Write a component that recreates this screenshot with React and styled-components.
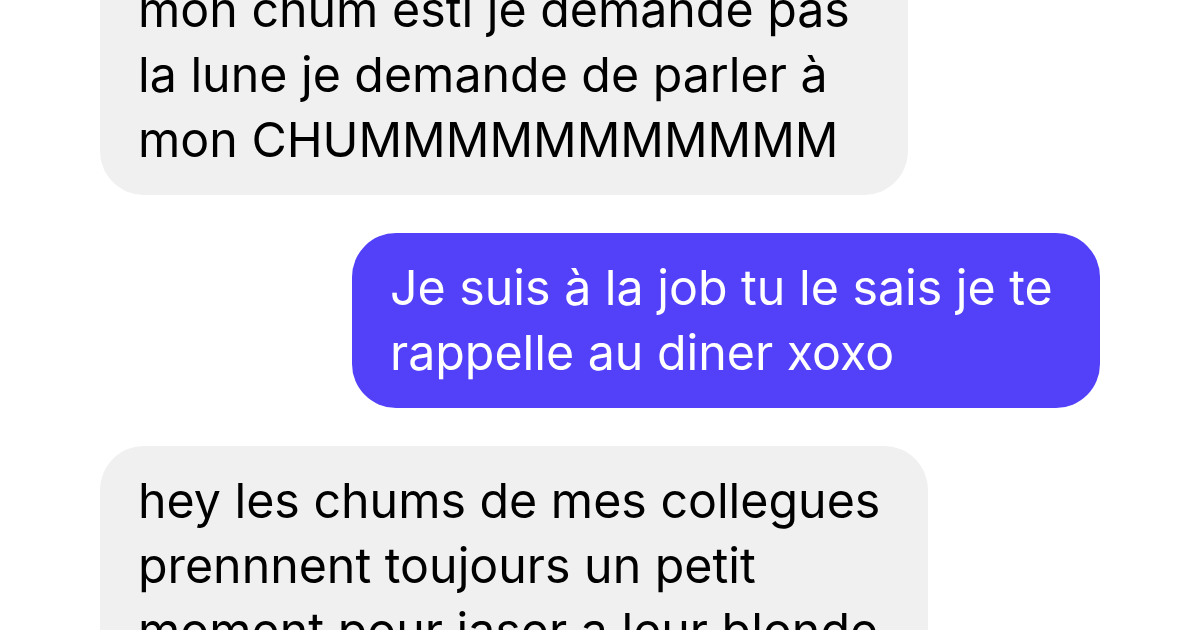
import React from "react";
import styled, { createGlobalStyle } from "styled-components";

const GlobalStyle = createGlobalStyle`
  html, body {
    margin: 0;
    padding: 0;
    background: #ffffff;
  }
  body {
    font-family: Inter, "Noto Sans", "Liberation Sans", sans-serif;
  }
`;

const Page = styled.div`
  width: 1200px;
  height: 630px;
  overflow: hidden;
  background: #ffffff;
`;

const Thread = styled.div`
  display: flex;
  flex-direction: column;
  gap: 38px;
  padding: 0 100px;
  margin-top: ${(p) => p.$offset}px;
`;

const Bubble = styled.div`
  box-sizing: border-box;
  width: ${(p) => p.$width}px;
  align-self: ${(p) => (p.$out ? "flex-end" : "flex-start")};
  background: ${(p) => (p.$out ? "#5341FA" : "#F0F0F0")};
  color: ${(p) => (p.$out ? "#ffffff" : "#000000")};
  border-radius: 44px;
  padding: 22px 38px 23px;
  font-size: 48.3px;
  line-height: 65px;
  letter-spacing: 0;
`;

const Line = styled.span`
  display: block;
  white-space: nowrap;
`;

const messages = [
  {
    out: false,
    width: 808,
    lines: [
      "mon chum esti je demande pas",
      "la lune je demande de parler à",
      "mon CHUMMMMMMMMMMM",
    ],
  },
  {
    out: true,
    width: 748,
    lines: ["Je suis à la job tu le sais je te", "rappelle au diner xoxo"],
  },
  {
    out: false,
    width: 828,
    lines: [
      "hey les chums de mes collegues",
      "prennnent toujours un petit",
      "moment pour jaser a leur blonde",
    ],
  },
];

export default function App() {
  return (
    <>
      <GlobalStyle />
      <Page>
        <Thread $offset={-45}>
          {messages.map((m, i) => (
            <Bubble key={i} $out={m.out} $width={m.width}>
              {m.lines.map((l, j) => (
                <Line key={j}>{l}</Line>
              ))}
            </Bubble>
          ))}
        </Thread>
      </Page>
    </>
  );
}
